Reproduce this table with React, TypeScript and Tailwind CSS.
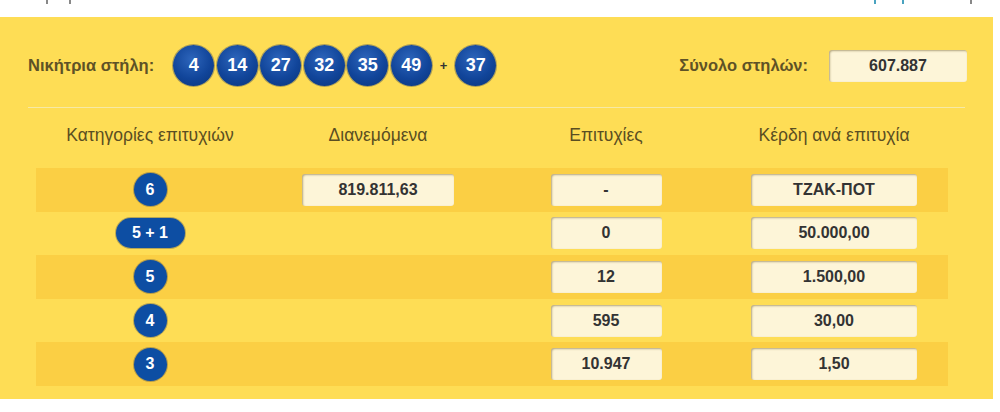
import React from "react";

const balls = ["4", "14", "27", "32", "35", "49"];

const rows = [
  { cat: "6", dist: "819.811,63", wins: "-", prize: "ΤΖΑΚ-ΠΟΤ" },
  { cat: "5 + 1", dist: "", wins: "0", prize: "50.000,00" },
  { cat: "5", dist: "", wins: "12", prize: "1.500,00" },
  { cat: "4", dist: "", wins: "595", prize: "30,00" },
  { cat: "3", dist: "", wins: "10.947", prize: "1,50" },
];

const Ball: React.FC<{ n: string }> = ({ n }) => (
  <div className="w-[41px] h-[41px] rounded-full flex items-center justify-center text-white font-bold text-[18px] bg-[radial-gradient(circle_at_45%_35%,#2d65bb_0%,#11459a_55%,#0a3478_100%)] shadow-[0_0_0_1px_rgba(20,40,90,0.35)]">
    {n}
  </div>
);

const Box: React.FC<{ w: string; children: React.ReactNode }> = ({ w, children }) => (
  <div
    className={`${w} h-[32px] rounded-[3px] bg-[#fdf5d8] shadow-[inset_1px_1px_2px_rgba(90,70,20,0.45)] flex items-center justify-center font-bold text-[16px] text-[#333]`}
  >
    {children}
  </div>
);

const App: React.FC = () => {
  return (
    <div className="w-[1000px] h-[412px] bg-white overflow-hidden" style={{ fontFamily: '"Liberation Sans", Arial, sans-serif' }}>
      <div className="h-[17px] flex items-start">
        <span className="ml-[46px] w-[2px] h-[4px] bg-[#888]" />
        <span className="ml-[21px] w-[2px] h-[4px] bg-[#888]" />
        <span className="ml-[803px] w-[2px] h-[4px] bg-[#4aa3c0]" />
        <span className="ml-[26px] w-[2px] h-[4px] bg-[#4aa3c0]" />
        <span className="ml-[66px] w-[2px] h-[4px] bg-[#888]" />
      </div>
      <div className="w-[993px] h-[382px] bg-[#fedd55] pt-[28px]">
        <div className="flex items-center pl-[28px] pr-[26px] h-[41px]">
          <span className="font-bold text-[16.5px] text-[#5e5226] mr-[19px]">Νικήτρια στήλη:</span>
          <div className="flex items-center gap-[2.5px]">
            {balls.map((b) => (
              <Ball key={b} n={b} />
            ))}
          </div>
          <span className="font-bold text-[13px] text-[#333] mx-[8px]">+</span>
          <Ball n="37" />
          <span className="ml-auto font-bold text-[16.5px] text-[#5e5226] mr-[21px]">Σύνολο στηλών:</span>
          <Box w="w-[138px]">607.887</Box>
        </div>
        <div className="mt-[21px] ml-[28px] w-[937px] border-t border-[#f6e9a6]" />
        <div className="ml-[36px] w-[912px]">
          <div className="grid grid-cols-4 h-[54px] items-center text-center text-[17.5px] text-[#5a4e22]">
            <span>Κατηγορίες επιτυχιών</span>
            <span>Διανεμόμενα</span>
            <span>Επιτυχίες</span>
            <span>Κέρδη ανά επιτυχία</span>
          </div>
          <div className="mt-[6px]">
            {rows.map((r, i) => (
              <div
                key={r.cat}
                className={`grid grid-cols-4 h-[43.6px] items-center ${i % 2 === 0 ? "bg-[#fbcf44]" : ""}`}
              >
                <div className="flex justify-center">
                  <div
                    className={`${r.cat.length > 1 ? "w-[69px] h-[30px] rounded-[15px]" : "w-[33px] h-[33px] rounded-full"} bg-[#0d4ea3] shadow-[0_0_0_1px_rgba(20,40,90,0.3)] flex items-center justify-center text-white font-bold text-[16px]`}
                  >
                    {r.cat}
                  </div>
                </div>
                <div className="flex justify-center">
                  {r.dist && <Box w="w-[152px]">{r.dist}</Box>}
                </div>
                <div className="flex justify-center">
                  <Box w="w-[111px]">{r.wins}</Box>
                </div>
                <div className="flex justify-center">
                  <Box w="w-[166px]">{r.prize}</Box>
                </div>
              </div>
            ))}
          </div>
        </div>
      </div>
    </div>
  );
};

export default App;
